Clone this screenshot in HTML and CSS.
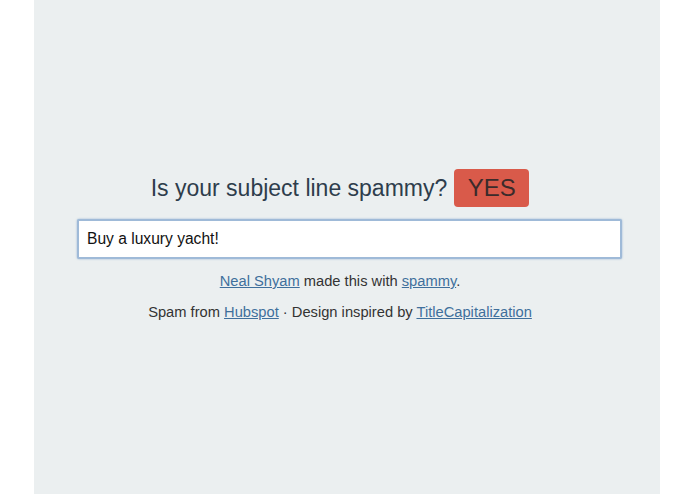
FILE: index.html
```html
<!DOCTYPE html>
<html>
<head>
<meta charset="utf-8">
<link rel="stylesheet" href="styles.css">
</head>
<body>
<main class="panel">
  <div class="content">
    <h1 class="title"><span class="question">Is your subject line spammy?</span><span class="badge">YES</span></h1>
    <div class="field"><input class="subject" type="text" value="Buy a luxury yacht!"></div>
    <p class="credit"><a href="#">Neal Shyam</a> made this with <a href="#">spammy</a>.</p>
    <p class="credit"><span>Spam from <a href="#">Hubspot</a> · Design inspired by <a href="#">TitleCapitalization</a></span></p>
  </div>
</main>
</body>
</html>
```
FILE: styles.css
```css
html, body {
  margin: 0;
  padding: 0;
  background: #ffffff;
  height: 100%;
}
body {
  font-family: "Liberation Sans", Arial, Helvetica, sans-serif;
  color: #333333;
}
.panel {
  width: 626px;
  margin: 0 35px 0 34px;
  min-height: 100%;
  background: #ebeff0;
  display: flex;
  flex-direction: column;
  box-sizing: border-box;
}
.content {
  padding-top: 169px;
  display: flex;
  flex-direction: column;
}
.title {
  margin: 0 14px 0 0;
  display: flex;
  justify-content: center;
  align-items: center;
  font-weight: normal;
  font-size: 23px;
  color: #2e3d4c;
  gap: 7px;
}
.badge {
  display: inline-flex;
  align-items: center;
  justify-content: center;
  width: 75px;
  height: 38px;
  background: #d95a4a;
  border-radius: 4px;
  color: #3b2b2b;
  font-size: 24px;
}
.field {
  margin: 12px 38px 0 43px;
}
.subject {
  display: block;
  width: 100%;
  height: 40px;
  box-sizing: border-box;
  border: 2px solid #9fbad8;
  border-radius: 2px;
  box-shadow: 0 0 2px rgba(80, 130, 190, 0.6);
  background: #ffffff;
  padding: 0 8px;
  font-family: "Liberation Sans", Arial, Helvetica, sans-serif;
  font-size: 15.6px;
  color: #111111;
  outline: none;
}
.credit {
  margin: 0 14px 0 0;
  text-align: center;
  font-size: 14.7px;
  line-height: 20px;
  color: #333333;
}
.credit:first-of-type {
  margin-top: 12px;
}
.credit + .credit {
  margin-top: 11px;
}
.credit a {
  color: #3f6f9c;
  text-decoration: underline;
}
```
